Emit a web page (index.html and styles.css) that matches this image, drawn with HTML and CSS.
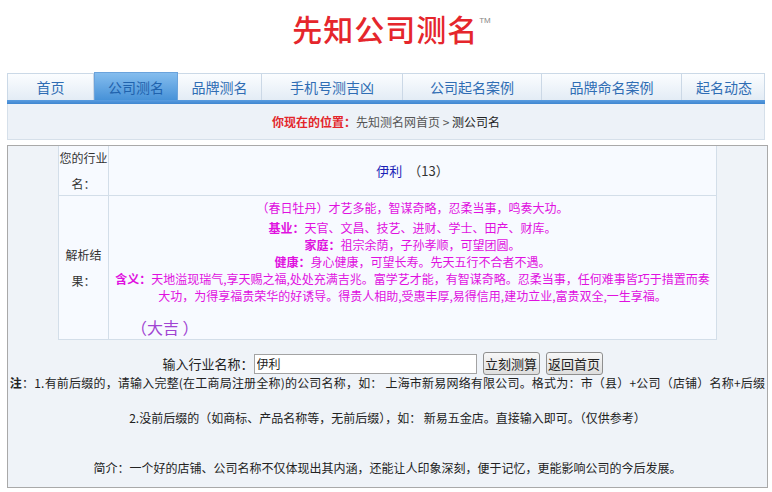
FILE: index.html
```html
<!DOCTYPE html>
<html lang="zh-CN">
<head>
<meta charset="utf-8">
<title>先知公司测名</title>
<link rel="stylesheet" href="styles.css">
</head>
<body>
<div class="page">
  <header class="logo">
    <h1 class="logo-title">先知公司测名<sup class="tm">TM</sup></h1>
  </header>

  <nav class="nav">
    <a class="nav-item">首页</a>
    <a class="nav-item active">公司测名</a>
    <a class="nav-item">品牌测名</a>
    <a class="nav-item">手机号测吉凶</a>
    <a class="nav-item">公司起名案例</a>
    <a class="nav-item">品牌命名案例</a>
    <a class="nav-item last">起名动态</a>
  </nav>
  <div class="nav-line"></div>

  <div class="crumb"><b class="crumb-label">你现在的位置：</b>先知测名网首页 &gt; <span class="crumb-cur">测公司名</span></div>

  <main class="box">
    <div class="result">
      <div class="lbl row1">您的行业名：</div>
      <div class="val row1"><span class="name">伊利</span>&nbsp;&nbsp;（13）</div>
      <div class="lbl row2">解析结果：</div>
      <div class="val row2 analysis">
        <div class="poem">（春日牡丹）才艺多能，智谋奇略，忍柔当事，鸣奏大功。</div>
        <div><b>基业：</b>天官、文昌、技艺、进财、学士、田产、财库。</div>
        <div><b>家庭：</b>祖宗余荫，子孙孝顺，可望团圆。</div>
        <div><b>健康：</b>身心健康，可望长寿。先天五行不合者不遇。</div>
        <div><b>含义：</b>天地溢现瑞气,享天赐之福,处处充满吉兆。富学艺才能，有智谋奇略。忍柔当事，任何难事皆巧于措置而奏<br>大功，为得享福贵荣华的好诱导。得贵人相助,受惠丰厚,易得信用,建功立业,富贵双全,一生享福。</div>
        <div class="luck">（大吉 ）</div>
      </div>
    </div>

    <form class="query">
      <label class="query-label" for="q">输入行业名称：</label>
      <input class="query-input" id="q" type="text" value="伊利">
      <button class="btn" type="button">立刻测算</button>
      <button class="btn" type="button">返回首页</button>
    </form>

    <p class="note note1"><b>注</b>：1.有前后缀的，请输入完整(在工商局注册全称)的公司名称，如： 上海市新易网络有限公司。格式为：市（县）+公司（店铺）名称+后缀</p>
    <p class="note note2">2.没前后缀的（如商标、产品名称等，无前后缀），如： 新易五金店。直接输入即可。（仅供参考）</p>
    <p class="note note3">简介：一个好的店铺、公司名称不仅体现出其内涵，还能让人印象深刻，便于记忆，更能影响公司的今后发展。</p>
  </main>
</div>
</body>
</html>
```

FILE: styles.css
```css
* { box-sizing: border-box; }

html, body {
  margin: 0;
  padding: 0;
  background: #ffffff;
  font-family: "Noto Sans CJK SC", "Liberation Sans", sans-serif;
  font-size: 12px;
  color: #222;
}

.page {
  width: 761px;
  margin-left: 7px;
}

/* header */
.logo {
  height: 73px;
  padding-top: 11px;
  text-align: center;
}
.logo-title {
  display: inline-block;
  margin: 0 0 0 8px;
  font-size: 30px;
  line-height: 34px;
  font-weight: 500;
  color: #e5262c;
  letter-spacing: 1px;
}
.tm {
  font-size: 8px;
  font-weight: 400;
  color: #888;
  vertical-align: top;
  position: relative;
  top: -7px;
  margin-left: 1px;
  letter-spacing: 0;
  font-family: "Liberation Sans", sans-serif;
}

/* nav */
.nav {
  width: 758px;
  height: 27px;
  display: grid;
  grid-template-columns: 86px 84px 84px 141px 139px 140px 84px;
  border: 1px solid #cbd9e7;
  border-bottom: 0;
  background: linear-gradient(#fbfdff, #e3ecf5);
}
.nav-item {
  display: flex;
  align-items: center;
  justify-content: center;
  font-size: 14px;
  color: #2f6db4;
  border-right: 1px solid #cbd8e6;
  cursor: pointer;
}
.nav-item.last { border-right: 0; }
.nav-item.active {
  margin-top: -2px;
  background: linear-gradient(#85bdee, #4792d8);
  border: 1px solid #6aa3dc;
  border-bottom: 0;
  color: #1f62ad;
}
.nav-line {
  width: 758px;
  height: 4px;
  background: linear-gradient(#5a9de0, #3f86d0);
}

/* breadcrumb */
.crumb {
  width: 758px;
  height: 36px;
  line-height: 36px;
  text-align: center;
  background: #edf2f8;
  border: 1px solid #d6e0ea;
  border-top: 0;
  color: #555;
  font-size: 12px;
}
.crumb-label { color: #e3262b; font-weight: 700; }
.crumb-cur { color: #222; }

/* main box */
.box {
  margin-top: 5px;
  width: 761px;
  background: #eff3f8;
  border: 1px solid #a9a9a9;
  padding-bottom: 11px;
}

.result {
  width: 659px;
  margin: 0 auto;
  display: grid;
  grid-template-columns: 50px 1fr;
  grid-template-rows: 50px 144px;
  background: #f7faff;
  border-left: 1px solid #d3dee9;
  border-right: 1px solid #d3dee9;
}
.lbl {
  display: flex;
  align-items: center;
  justify-content: center;
  text-align: center;
  font-size: 12px;
  line-height: 26px;
  color: #333;
  border-right: 1px solid #d3dee9;
  border-bottom: 1px solid #d3dee9;
  padding: 0;
}
.val {
  border-bottom: 1px solid #d3dee9;
}
.val.row1 {
  display: flex;
  align-items: center;
  justify-content: center;
  font-size: 13px;
  color: #333;
}
.name { color: #1b1fb6; }

.analysis {
  padding-top: 3px;
  text-align: center;
  color: #e010e0;
  font-size: 12px;
  line-height: 17px;
}
.analysis b { font-weight: 700; }
.poem { margin-bottom: 3px; }
.luck {
  margin-top: 12px;
  text-align: left;
  padding-left: 22px;
  font-size: 16px;
  line-height: 22px;
  color: #a044d2;
}

/* query form */
.query {
  margin: 12px 0 0;
  padding-right: 10px;
  display: flex;
  justify-content: center;
  align-items: center;
  height: 23px;
}
.query-label {
  font-size: 13px;
  color: #222;
}
.query-input {
  width: 223px;
  height: 20px;
  margin: 0;
  padding: 0 2px;
  border: 1px solid #a3a3a3;
  background: #fff;
  font-family: "Noto Sans CJK SC", sans-serif;
  font-size: 12px;
  color: #222;
}
.btn {
  margin-left: 6px;
  width: 57px;
  height: 23px;
  padding: 0;
  border: 1px solid #8f8f8f;
  border-radius: 3px;
  background: linear-gradient(#f7f7f7, #dedede);
  font-family: "Noto Sans CJK SC", sans-serif;
  font-size: 13px;
  color: #222;
}

.note {
  margin: 0;
  text-align: center;
  font-size: 12px;
  line-height: 16px;
  white-space: nowrap;
  color: #222;
}
.note1 { letter-spacing: 0.2px; }
.note1 b { font-weight: 700; }
.note2 { margin-top: 19px; }
.note3 { margin-top: 34px; }
```
